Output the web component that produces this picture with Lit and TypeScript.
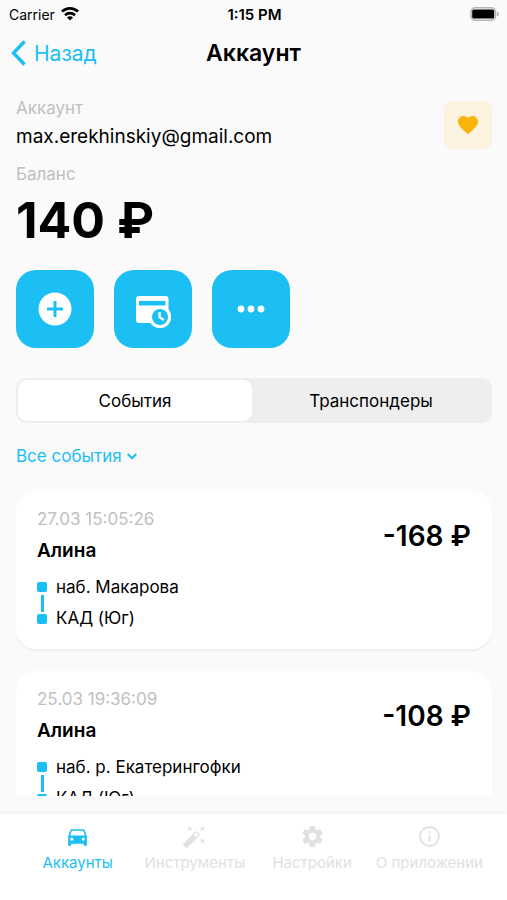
import { LitElement, html, svg, css } from "lit";
import { customElement, property, state } from "lit/decorators.js";
import { classMap } from "lit/directives/class-map.js";

const icons = {
  heart: svg`<path d="M12,21.35L10.55,20.03C5.4,15.36 2,12.27 2,8.5C2,5.41 4.42,3 7.5,3C9.24,3 10.91,3.81 12,5.08C13.09,3.81 14.76,3 16.5,3C19.58,3 22,5.41 22,8.5C22,12.27 18.6,15.36 13.45,20.03L12,21.35Z"/>`,
  car: svg`<path d="M5,11L6.5,6.5H17.5L19,11M17.5,16A1.5,1.5 0 0,1 16,14.5A1.5,1.5 0 0,1 17.5,13A1.5,1.5 0 0,1 19,14.5A1.5,1.5 0 0,1 17.5,16M6.5,16A1.5,1.5 0 0,1 5,14.5A1.5,1.5 0 0,1 6.5,13A1.5,1.5 0 0,1 8,14.5A1.5,1.5 0 0,1 6.5,16M18.92,6C18.72,5.42 18.16,5 17.5,5H6.5C5.84,5 5.28,5.42 5.08,6L3,12V20A1,1 0 0,0 4,21H5A1,1 0 0,0 6,20V19H18V20A1,1 0 0,0 19,21H20A1,1 0 0,0 21,20V12L18.92,6Z"/>`,
  wand: svg`<path d="M7.5,5.6L5,7L6.4,4.5L5,2L7.5,3.4L10,2L8.6,4.5L10,7L7.5,5.6M19.5,15.4L22,14L20.6,16.5L22,19L19.5,17.6L17,19L18.4,16.5L17,14L19.5,15.4M22,2L20.6,4.5L22,7L19.5,5.6L17,7L18.4,4.5L17,2L19.5,3.4L22,2M13.34,12.78L15.78,10.34L13.66,8.22L11.22,10.66L13.34,12.78M14.37,7.29L16.71,9.63C17.1,10 17.1,10.65 16.71,11.04L5.04,22.71C4.65,23.1 4,23.1 3.63,22.71L1.29,20.37C0.9,20 0.9,19.35 1.29,18.96L12.96,7.29C13.35,6.9 14,6.9 14.37,7.29Z"/>`,
  cog: svg`<path d="M12,15.5A3.5,3.5 0 0,1 8.5,12A3.5,3.5 0 0,1 12,8.5A3.5,3.5 0 0,1 15.5,12A3.5,3.5 0 0,1 12,15.5M19.43,12.97C19.47,12.65 19.5,12.33 19.5,12C19.5,11.67 19.47,11.34 19.43,11L21.54,9.37C21.73,9.22 21.78,8.95 21.66,8.73L19.66,5.27C19.54,5.05 19.27,4.96 19.05,5.05L16.56,6.05C16.04,5.66 15.5,5.32 14.87,5.07L14.5,2.42C14.46,2.18 14.25,2 14,2H10C9.75,2 9.54,2.18 9.5,2.42L9.13,5.07C8.5,5.32 7.96,5.66 7.44,6.05L4.95,5.05C4.73,4.96 4.46,5.05 4.34,5.27L2.34,8.73C2.21,8.95 2.27,9.22 2.46,9.37L4.57,11C4.53,11.34 4.5,11.67 4.5,12C4.5,12.33 4.53,12.65 4.57,12.97L2.46,14.63C2.27,14.78 2.21,15.05 2.34,15.27L4.34,18.73C4.46,18.95 4.73,19.03 4.95,18.95L7.44,17.94C7.96,18.34 8.5,18.68 9.13,18.93L9.5,21.58C9.54,21.82 9.75,22 10,22H14C14.25,22 14.46,21.82 14.5,21.58L14.87,18.93C15.5,18.67 16.04,18.34 16.56,17.94L19.05,18.95C19.27,19.03 19.54,18.95 19.66,18.73L21.66,15.27C21.78,15.05 21.73,14.78 21.54,14.63L19.43,12.97Z"/>`,
  info: svg`<path d="M11,9H13V7H11M12,20.2A8.2,8.2 0 1,1 12,3.8A8.2,8.2 0 1,1 12,20.2M12,2A10,10 0 1,0 12,22A10,10 0 1,0 12,2M11,17H13V11H11V17Z" fill-rule="evenodd"/>`,
};

interface TollEvent {
  time: string;
  name: string;
  amount: string;
  from: string;
  to: string;
}

@customElement("event-card")
export class EventCard extends LitElement {
  @property({ attribute: false }) event!: TollEvent;

  static styles = css`
    :host {
      display: flex;
      justify-content: space-between;
      padding: 16px 21px 15px 21px;
      border-radius: 20px;
      background: #fff;
      box-shadow: 0 2px 2px rgba(0, 0, 0, 0.05);
    }
    .time {
      font-size: 17px;
      line-height: 24px;
      color: #c0c0c0;
    }
    .name {
      margin: 6px 0 7px;
      font-size: 19px;
      line-height: 28px;
      font-weight: 600;
    }
    .route {
      display: flex;
      gap: 9px;
      font-size: 17px;
      line-height: 31px;
    }
    .track {
      display: flex;
      flex-direction: column;
      align-items: center;
      justify-content: space-between;
      width: 10px;
      padding: 10px 0;
    }
    .stop {
      width: 10px;
      height: 10px;
      border-radius: 2px;
      background: #1bbff4;
    }
    .line {
      width: 3px;
      height: 17px;
      background: #1bbff4;
    }
    .amount {
      padding-top: 10px;
      font-size: 28px;
      line-height: 38px;
      font-weight: 600;
      white-space: nowrap;
    }
  `;

  render() {
    const e = this.event;
    return html`
      <div>
        <div class="time">${e.time}</div>
        <div class="name">${e.name}</div>
        <div class="route">
          <div class="track">
            <span class="stop"></span><span class="line"></span><span class="stop"></span>
          </div>
          <div>
            <div>${e.from}</div>
            <div>${e.to}</div>
          </div>
        </div>
      </div>
      <div class="amount">${e.amount}</div>
    `;
  }
}

@customElement("app-root")
export class AppRoot extends LitElement {
  @state() private tab = 0;

  private events: TollEvent[] = [
    { time: "27.03 15:05:26", name: "Алина", amount: "-168 ₽", from: "наб. Макарова", to: "КАД (Юг)" },
    { time: "25.03 19:36:09", name: "Алина", amount: "-108 ₽", from: "наб. р. Екатерингофки", to: "КАД (Юг)" },
  ];

  private sections = [
    { label: "Аккаунты", icon: icons.car },
    { label: "Инструменты", icon: icons.wand },
    { label: "Настройки", icon: icons.cog },
    { label: "О приложении", icon: icons.info },
  ];

  static styles = css`
    :host {
      display: flex;
      flex-direction: column;
      height: 100vh;
      background: #fafafa;
      color: #000;
      font-family: Inter, "Liberation Sans", sans-serif;
    }
    * {
      box-sizing: border-box;
    }
    svg {
      display: block;
    }
    button,
    select {
      margin: 0;
      padding: 0;
      border: 0;
      background: none;
      color: inherit;
      font: inherit;
      cursor: pointer;
    }
    .status,
    .header {
      display: grid;
      grid-template-columns: 1fr auto 1fr;
      align-items: center;
      flex: none;
    }
    .status {
      height: 28px;
      padding: 0 7px 0 9px;
      font-size: 14px;
    }
    .carrier {
      display: flex;
      align-items: center;
      gap: 6px;
    }
    .clock {
      font-size: 15px;
      font-weight: 600;
    }
    .battery {
      justify-self: end;
    }
    .header {
      height: 50px;
      padding: 0 11px;
    }
    .back {
      display: flex;
      align-items: center;
      gap: 8px;
      justify-self: start;
      color: #1bbff4;
      font-size: 21px;
    }
    .title {
      margin: 0;
      font-size: 23px;
      font-weight: 600;
    }
    .content {
      display: flex;
      flex-direction: column;
      flex: 1;
      min-height: 0;
      padding: 18px 15px 18px 16px;
    }
    .account {
      display: flex;
      justify-content: space-between;
      align-items: center;
    }
    .label {
      font-size: 17px;
      line-height: 24px;
      color: #c0c0c0;
    }
    .email {
      font-size: 19px;
      line-height: 34px;
    }
    .favorite {
      display: grid;
      place-items: center;
      width: 48px;
      height: 48px;
      border-radius: 8px;
      background: #fbf3e0;
      color: #f9b40b;
    }
    .balance-label {
      margin-top: 8px;
    }
    .balance {
      font-size: 50px;
      line-height: 68px;
      font-weight: 700;
    }
    .actions {
      display: flex;
      gap: 20px;
      margin-top: 16px;
    }
    .action {
      display: grid;
      place-items: center;
      width: 78px;
      height: 78px;
      border-radius: 20px;
      background: #1bbff4;
    }
    .segments {
      display: grid;
      grid-template-columns: 59fr 60fr;
      flex: none;
      height: 45px;
      margin-top: 30px;
      padding: 2px;
      border-radius: 10px;
      background: #eee;
      font-size: 17px;
    }
    .segment {
      border-radius: 9px;
    }
    .segment.selected {
      background: #fff;
    }
    .filter {
      display: flex;
      align-items: center;
      align-self: flex-start;
      gap: 5px;
      height: 28px;
      margin: 19px 0 11px;
      color: #1bbff4;
      font-size: 17px;
    }
    .filter select {
      appearance: none;
      field-sizing: content;
    }
    .events {
      display: flex;
      flex-direction: column;
      gap: 22px;
      flex: 1;
      min-height: 0;
      overflow-y: auto;
      scrollbar-width: none;
      margin: 0 -15px 0 -16px;
      padding: 10px 15px 0 16px;
    }
    .tabs {
      display: grid;
      grid-template-columns: repeat(4, 1fr);
      flex: none;
      height: 86px;
      padding: 10px 19px 0;
      background: #fff;
      box-shadow: 0 -1px 4px rgba(0, 0, 0, 0.06);
    }
    .tab {
      display: flex;
      flex-direction: column;
      align-items: center;
      gap: 4px;
      color: #e1e1e1;
      font-size: 15px;
      line-height: 20px;
      text-decoration: none;
      white-space: nowrap;
    }
    .tab.current {
      color: #1bbff4;
    }
  `;

  render() {
    return html`
      <div class="status">
        <div class="carrier">
          <span>Carrier</span>
          <svg width="18" height="14" viewBox="0 0 18 14" fill="none" stroke="#000" stroke-width="2.7">
            <path d="M1 4.6A11.6 11.6 0 0 1 17 4.6" />
            <path d="M4 8.2A7.2 7.2 0 0 1 14 8.2" />
            <path d="M9 13.6L6 10.6A4.2 4.2 0 0 1 12 10.6Z" fill="#000" stroke="none" />
          </svg>
        </div>
        <span class="clock">1:15 PM</span>
        <svg class="battery" width="31" height="14" viewBox="0 0 31 14">
          <rect x="2" y="0.8" width="24.5" height="12.4" rx="4" fill="#fafafa" stroke="#b5b5b5" stroke-width="1.6" />
          <rect x="3.2" y="2.5" width="22" height="9" rx="1.5" />
          <path d="M28 4.5Q32 7 28 9.5Z" fill="#b5b5b5" />
        </svg>
      </div>

      <header class="header">
        <button class="back">
          <svg width="15" height="26" viewBox="0 0 15 26" fill="none" stroke="currentColor" stroke-width="3.4">
            <path d="M13.5 1.5L2.5 13L13.5 24.5" />
          </svg>
          <span>Назад</span>
        </button>
        <h1 class="title">Аккаунт</h1>
      </header>

      <main class="content">
        <div class="account">
          <div>
            <div class="label">Аккаунт</div>
            <div class="email">max.erekhinskiy@gmail.com</div>
          </div>
          <button class="favorite" aria-label="Избранное">
            <svg width="24" height="24" viewBox="0 0 24 24" fill="currentColor">${icons.heart}</svg>
          </button>
        </div>
        <div class="label balance-label">Баланс</div>
        <div class="balance">140 ₽</div>

        <div class="actions">
          <button class="action" aria-label="Пополнить">
            <svg width="34" height="34" viewBox="0 0 34 34">
              <circle cx="17" cy="17" r="16.5" fill="#fff" />
              <path d="M17 9V25M9 17H25" stroke="#1bbff4" stroke-width="3" />
            </svg>
          </button>
          <button class="action" aria-label="История платежей">
            <svg width="36" height="38" viewBox="0 0 36 38">
              <rect x="1" y="6" width="32.5" height="27" rx="3" fill="#fff" />
              <path d="M4 13.2H30.5" stroke="#1bbff4" stroke-width="4.6" />
              <circle cx="25" cy="27" r="11.2" fill="#fff" />
              <circle cx="25" cy="27" r="8" fill="#1bbff4" />
              <path d="M24.6 22V27.2L28.8 30" fill="none" stroke="#fff" stroke-width="2.4" />
            </svg>
          </button>
          <button class="action" aria-label="Ещё">
            <svg width="28" height="8" viewBox="0 0 28 8" fill="#fff">
              <circle cx="4" cy="4" r="3.4" />
              <circle cx="14" cy="4" r="3.4" />
              <circle cx="24" cy="4" r="3.4" />
            </svg>
          </button>
        </div>

        <div class="segments" role="tablist">
          ${["События", "Транспондеры"].map(
            (label, i) => html`<button
              role="tab"
              aria-selected=${this.tab === i ? "true" : "false"}
              class=${classMap({ segment: true, selected: this.tab === i })}
              @click=${() => (this.tab = i)}
            >${label}</button>`
          )}
        </div>

        <label class="filter">
          <select aria-label="Фильтр событий">
            <option>Все события</option>
          </select>
          <svg width="10" height="7" viewBox="0 0 10 7" fill="none" stroke="currentColor" stroke-width="2">
            <path d="M0.7 1L5 5.3L9.3 1" />
          </svg>
        </label>

        <div class="events">
          ${this.events.map((e) => html`<event-card .event=${e}></event-card>`)}
        </div>
      </main>

      <nav class="tabs">
        ${this.sections.map(
          (s, i) => html`<a href="#" class=${classMap({ tab: true, current: i === 0 })}>
            <svg width="25" height="25" viewBox="0 0 24 24" fill="currentColor">${s.icon}</svg>
            <span>${s.label}</span>
          </a>`
        )}
      </nav>
    `;
  }
}
